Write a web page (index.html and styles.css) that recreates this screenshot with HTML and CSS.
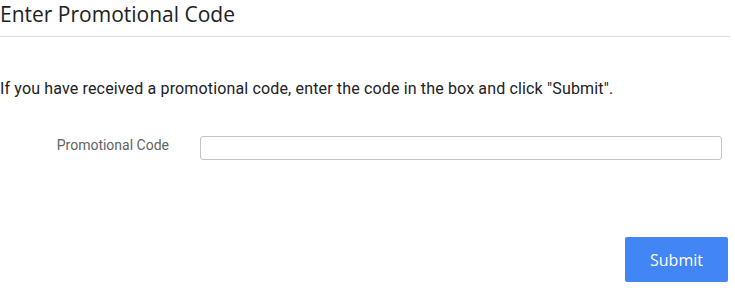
FILE: index.html
```html
<!DOCTYPE html>
<html>
<head>
<meta charset="utf-8">
<link rel="stylesheet" href="styles.css">
</head>
<body>
<div class="page">
  <h1 class="title">Enter Promotional Code</h1>
  <p class="intro">If you have received a promotional code, enter the code in the box and click "Submit".</p>
  <div class="field">
    <label class="label" for="code">Promotional Code</label>
    <input class="input" id="code" type="text">
  </div>
  <div class="actions">
    <button class="submit" type="button">Submit</button>
  </div>
</div>
</body>
</html>
```
FILE: styles.css
```css
html, body {
  margin: 0;
  padding: 0;
  background: #fff;
}
.page {
  width: 730px;
  font-family: Roboto, "Liberation Sans", sans-serif;
  color: #202124;
}
.title {
  margin: 0;
  height: 36px;
  border-bottom: 1px solid #dadce0;
  font-family: "Open Sans", sans-serif;
  font-weight: 400;
  font-size: 21px;
  line-height: 29px;
  color: #202124;
}
.intro {
  margin: 41px 0 0;
  font-size: 16px;
  letter-spacing: 0.15px;
  line-height: 22px;
  color: #202124;
}
.field {
  display: flex;
  align-items: flex-start;
  margin-top: 36px;
}
.label {
  width: 169px;
  margin-right: 31px;
  text-align: right;
  font-size: 14px;
  line-height: 18px;
  color: #5f6368;
}
.input {
  width: 522px;
  height: 24px;
  box-sizing: border-box;
  border: 1px solid #c4c4c4;
  border-radius: 3px;
  margin: 0;
  padding: 0 6px;
  font-family: inherit;
}
.actions {
  display: flex;
  justify-content: flex-end;
  margin-top: 77px;
  padding-right: 2px;
}
.submit {
  width: 103px;
  height: 45px;
  border: none;
  border-radius: 2px;
  background: #4285f4;
  color: #fff;
  font-family: "Open Sans", sans-serif;
  font-size: 16px;
  font-weight: 500;
}
```
